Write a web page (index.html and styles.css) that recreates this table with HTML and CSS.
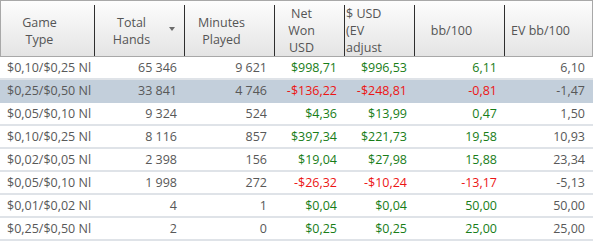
FILE: index.html
```html
<!DOCTYPE html>
<html lang="en">
    <head>
        <meta charset="UTF-8">
        <title>Game Types</title>
        <link rel="stylesheet" href="styles.css">
    </head>
    <body>
        <div class="stats">
            <div class="head">
                <div class="hcell">Game<br>Type</div>
                <div class="hcell sorted">Total<br>Hands<span class="sort-arrow"></span></div>
                <div class="hcell">Minutes<br>Played</div>
                <div class="hcell">Net<br>Won<br>USD</div>
                <div class="hcell left">$ USD<br>(EV<br>adjust</div>
                <div class="hcell">bb/100</div>
                <div class="hcell last">EV bb/100</div>
            </div>
            <div class="row">
                <div class="cell name">$0,10/$0,25 Nl</div>
                <div class="cell">65 346</div>
                <div class="cell">9 621</div>
                <div class="cell pos">$998,71</div>
                <div class="cell pos">$996,53</div>
                <div class="cell pos">6,11</div>
                <div class="cell">6,10</div>
            </div>
            <div class="row selected">
                <div class="cell name">$0,25/$0,50 Nl</div>
                <div class="cell">33 841</div>
                <div class="cell">4 746</div>
                <div class="cell neg">-$136,22</div>
                <div class="cell neg">-$248,81</div>
                <div class="cell neg">-0,81</div>
                <div class="cell">-1,47</div>
            </div>
            <div class="row">
                <div class="cell name">$0,05/$0,10 Nl</div>
                <div class="cell">9 324</div>
                <div class="cell">524</div>
                <div class="cell pos">$4,36</div>
                <div class="cell pos">$13,99</div>
                <div class="cell pos">0,47</div>
                <div class="cell">1,50</div>
            </div>
            <div class="row">
                <div class="cell name">$0,10/$0,25 Nl</div>
                <div class="cell">8 116</div>
                <div class="cell">857</div>
                <div class="cell pos">$397,34</div>
                <div class="cell pos">$221,73</div>
                <div class="cell pos">19,58</div>
                <div class="cell">10,93</div>
            </div>
            <div class="row">
                <div class="cell name">$0,02/$0,05 Nl</div>
                <div class="cell">2 398</div>
                <div class="cell">156</div>
                <div class="cell pos">$19,04</div>
                <div class="cell pos">$27,98</div>
                <div class="cell pos">15,88</div>
                <div class="cell">23,34</div>
            </div>
            <div class="row">
                <div class="cell name">$0,05/$0,10 Nl</div>
                <div class="cell">1 998</div>
                <div class="cell">272</div>
                <div class="cell neg">-$26,32</div>
                <div class="cell neg">-$10,24</div>
                <div class="cell neg">-13,17</div>
                <div class="cell">-5,13</div>
            </div>
            <div class="row">
                <div class="cell name">$0,01/$0,02 Nl</div>
                <div class="cell">4</div>
                <div class="cell">1</div>
                <div class="cell pos">$0,04</div>
                <div class="cell pos">$0,04</div>
                <div class="cell pos">50,00</div>
                <div class="cell">50,00</div>
            </div>
            <div class="row">
                <div class="cell name">$0,25/$0,50 Nl</div>
                <div class="cell">2</div>
                <div class="cell">0</div>
                <div class="cell pos">$0,25</div>
                <div class="cell pos">$0,25</div>
                <div class="cell pos">25,00</div>
                <div class="cell">25,00</div>
            </div>
        </div>
    </body>
</html>
```

FILE: styles.css
```css
body {
    margin: 0;
    background: #fff;
    font-family: 'Open Sans', 'Noto Sans', sans-serif;
    font-size: 12.5px;
    color: #585858;
}
.stats {
    width: 593px;
}
.head {
    display: grid;
    grid-template-columns: 94px 90px 90px 70px 70px 90px 1fr;
    box-sizing: border-box;
    height: 57px;
    padding: 4px 0 2px;
    border: 1px solid #a8a8a8;
    background: linear-gradient(#fdfdfd, #e4e4e4);
}
.hcell {
    position: relative;
    display: flex;
    align-items: center;
    justify-content: center;
    padding: 0 18px 0 2px;
    border-right: 1px solid #2e2e2e;
    text-align: center;
    line-height: 17px;
    color: #555;
}
.hcell.left {
    justify-content: flex-start;
    text-align: left;
    padding-left: 1px;
}
.hcell.last {
    border-right: none;
}
.sort-arrow {
    position: absolute;
    right: 9px;
    top: 22px;
    border-left: 3.5px solid transparent;
    border-right: 3.5px solid transparent;
    border-top: 4px solid #6b6b6b;
}
.row {
    display: grid;
    grid-template-columns: 95px 90px 90px 70px 70px 90px 1fr;
    box-sizing: border-box;
    height: 23px;
    border-bottom: 2px solid #dfe3e8;
}
.row.selected {
    background: #c3cfdb;
    border-bottom-color: #c3cfdb;
}
.cell {
    padding: 0 8px;
    line-height: 21px;
    text-align: right;
    white-space: nowrap;
}
.cell.name {
    text-align: left;
    padding-left: 7px;
}
.pos {
    color: #187d18;
}
.neg {
    color: #ec1515;
}
```
